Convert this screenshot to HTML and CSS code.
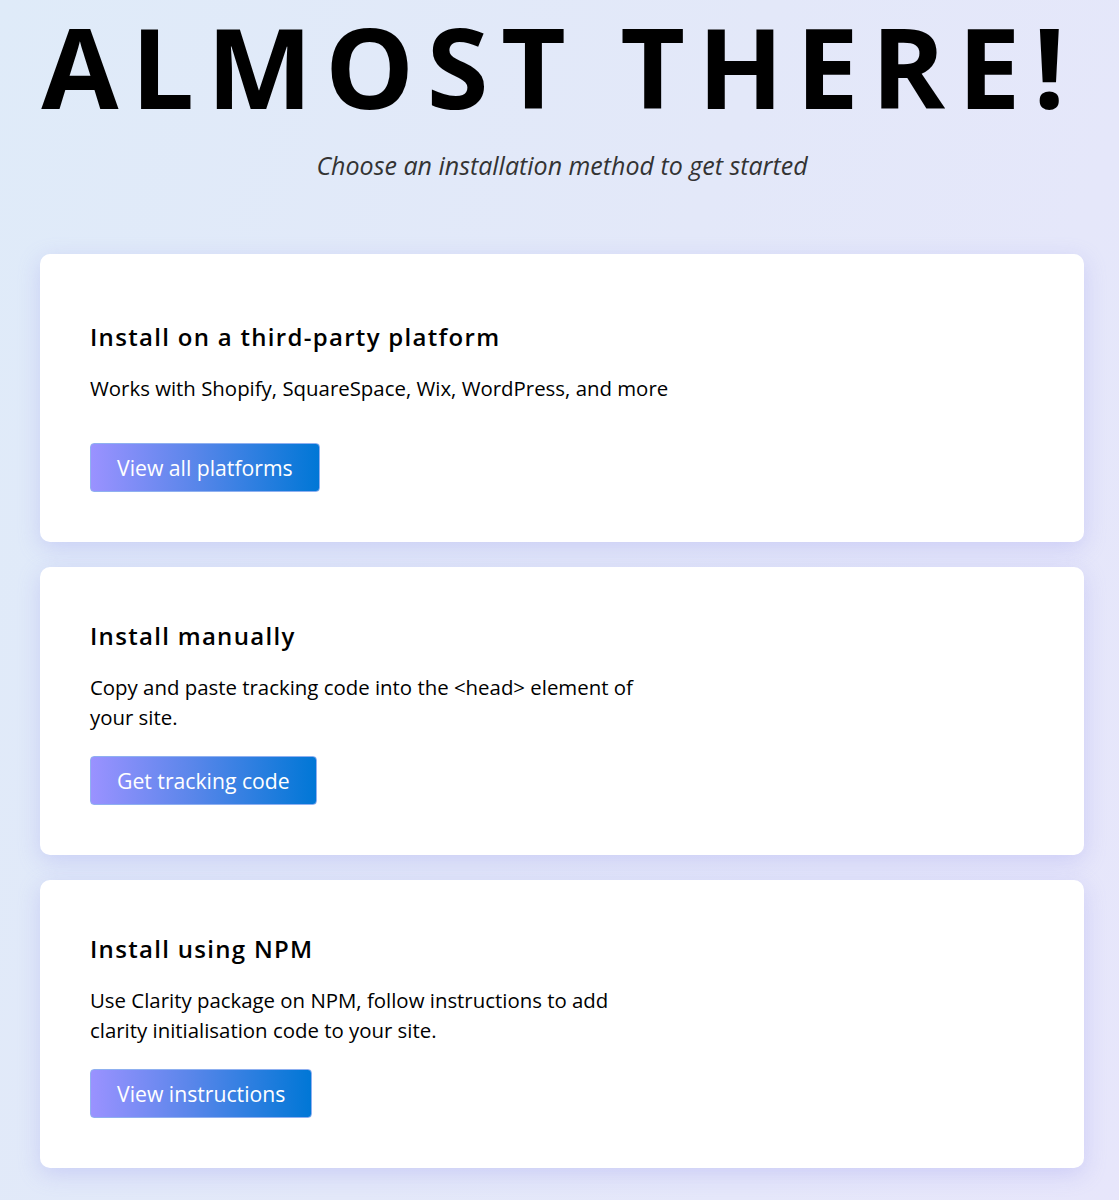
FILE: index.html
```html
<!DOCTYPE html>
<html>
  <head>
    <title>Almost there</title>
    <meta charset="utf-8"/>
    <link rel="stylesheet" href="styles.css">
  </head>
  <body>
    <div class="page">
      <h1 class="title">ALMOST THERE!</h1>
      <p class="subtitle">Choose an installation method to get started</p>

      <div class="methods">
        <div class="card">
          <h2>Install on a third-party platform</h2>
          <p>Works with Shopify, SquareSpace, Wix, WordPress, and more</p>
          <div><a class="btn" href="#">View all platforms</a></div>
        </div>
        <div class="card">
          <h2>Install manually</h2>
          <p>Copy and paste tracking code into the &lt;head&gt; element of your site.</p>
          <div><a class="btn" href="#">Get tracking code</a></div>
        </div>
        <div class="card">
          <h2>Install using NPM</h2>
          <p>Use Clarity package on NPM, follow instructions to add clarity initialisation code to your site.</p>
          <div><a class="btn" href="#">View instructions</a></div>
        </div>
      </div>
    </div>
  </body>
</html>
```

FILE: styles.css
```css
html, body {
  margin: 0;
  height: 100%;
}
body {
  font-family: "Open Sans", "Noto Sans", sans-serif;
  color: #000;
  background: linear-gradient(110deg, #dfebf9 0%, #e3e8f9 50%, #e7e6fb 100%);
}
.page {
  padding: 0 35px 0 40px;
}
.title {
  margin: 0 -35px 0 -40px;
  padding-top: 1px;
  font-size: 112px;
  line-height: 130px;
  font-weight: 700;
  letter-spacing: 12.6px;
  text-align: center;
  white-space: nowrap;
}
.subtitle {
  margin: 17px 0 0;
  text-align: center;
  font-style: italic;
  font-size: 25px;
  color: #333;
}

/* cards */
.methods {
  margin-top: 72px;
  display: flex;
  flex-direction: column;
  gap: 25px;
}
.card {
  height: 288px;
  box-sizing: border-box;
  background: #fff;
  border-radius: 10px;
  box-shadow: 0 6px 22px rgba(145, 145, 240, 0.3);
  padding: 0 50px 50px;
  display: flex;
  flex-direction: column;
  justify-content: flex-end;
}
.card h2 {
  margin: 0 0 21px;
  font-size: 24px;
  font-weight: 600;
  letter-spacing: 1.3px;
  line-height: 30px;
}
.card p {
  margin: 0 0 24px;
  max-width: 580px;
  font-size: 20.4px;
  line-height: 30px;
  min-height: 46px;
}
.btn {
  display: inline-block;
  height: 49px;
  box-sizing: border-box;
  padding: 0 26px;
  line-height: 47px;
  font-size: 21.2px;
  font-weight: 500;
  color: #fff;
  text-decoration: none;
  border-radius: 4px;
  border: 1px solid #8fb0f0;
  background: linear-gradient(90deg, #9a92ff 0%, #5a86ea 45%, #0077d6 100%);
}
```
